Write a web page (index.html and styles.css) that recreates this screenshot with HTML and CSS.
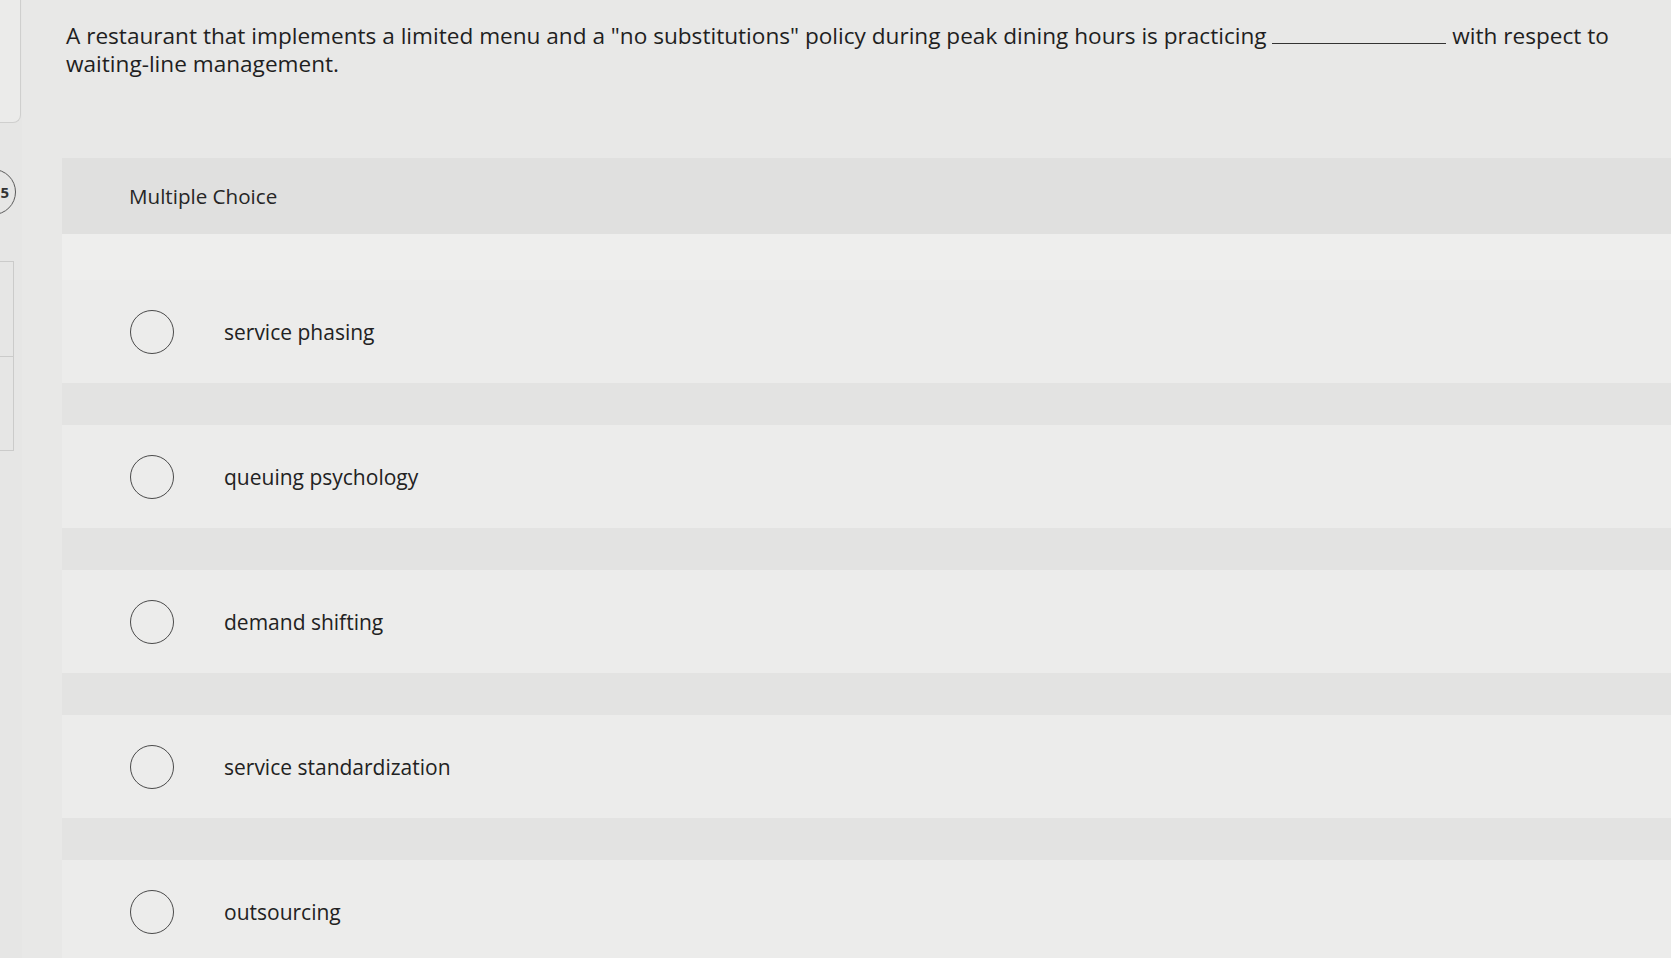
FILE: index.html
```html
<!DOCTYPE html>
<html lang="en">
<head>
<meta charset="utf-8">
<title>Multiple Choice</title>
<link rel="stylesheet" href="styles.css">
</head>
<body>
<div class="page">
  <aside class="rail">
    <div class="rail-card"></div>
    <div class="rail-badge"><span>5</span></div>
    <div class="rail-box"><div class="rail-box-top"></div><div class="rail-box-bottom"></div></div>
  </aside>
  <main class="main">
    <p class="question">A restaurant that implements a limited menu and a "no substitutions" policy during peak dining hours is practicing <span class="blank"></span> with respect to<br>waiting-line management.</p>
    <section class="panel">
      <div class="panel-head">Multiple Choice</div>
      <div class="panel-spacer"></div>
      <div class="option"><div class="option-body"><span class="radio"></span><span class="label">service phasing</span></div><div class="band"></div></div>
      <div class="option"><div class="option-body"><span class="radio"></span><span class="label">queuing psychology</span></div><div class="band"></div></div>
      <div class="option"><div class="option-body"><span class="radio"></span><span class="label">demand shifting</span></div><div class="band"></div></div>
      <div class="option"><div class="option-body"><span class="radio"></span><span class="label">service standardization</span></div><div class="band"></div></div>
      <div class="option"><div class="option-body"><span class="radio"></span><span class="label">outsourcing</span></div><div class="band"></div></div>
    </section>
  </main>
</div>
</body>
</html>
```

FILE: styles.css
```css
html, body {
  margin: 0;
  padding: 0;
  height: 100%;
  overflow: hidden;
}

body {
  background: #e8e8e7;
  font-family: "Open Sans", Lato, "Liberation Sans", sans-serif;
  color: #222;
}

.page {
  display: flex;
  height: 958px;
  overflow: hidden;
}

.rail {
  width: 22px;
  flex: none;
  display: flex;
  flex-direction: column;
  background: #e6e6e5;
}

.rail-card {
  flex: none;
  height: 122px;
  width: 20px;
  border: 1px solid #cfcfce;
  border-left: none;
  border-top: none;
  border-bottom-right-radius: 8px;
  background: #ebebea;
}

.rail-badge {
  flex: none;
  margin-top: 46px;
  margin-left: -30px;
  width: 46px;
  height: 46px;
  border: 1.5px solid #5a5a5a;
  border-radius: 50%;
  display: flex;
  align-items: center;
  justify-content: flex-end;
  padding-right: 12px;
  box-sizing: border-box;
  font-size: 15px;
  font-weight: 700;
  color: #333;
}

.rail-badge span {
  margin-right: -6px;
}

.rail-box {
  flex: none;
  margin-top: 46px;
  width: 13px;
  height: 188px;
  border: 1px solid #cbcbca;
  border-left: none;
  display: flex;
  flex-direction: column;
}

.rail-box-top {
  height: 94px;
  border-bottom: 1px solid #cbcbca;
}

.main {
  flex: 1;
  display: flex;
  flex-direction: column;
  padding-left: 40px;
  min-width: 0;
}

.question {
  flex: none;
  margin: 0;
  padding-top: 22px;
  padding-left: 4px;
  font-size: 22.6px;
  line-height: 28px;
  color: #1f1f1f;
  white-space: nowrap;
  height: 136px;
}

.blank {
  display: inline-block;
  width: 174px;
  height: 18px;
  border-bottom: 1.5px solid #333;
  vertical-align: baseline;
}

.panel {
  flex: none;
  background: #ebebeb;
  display: flex;
  flex-direction: column;
}

.panel-head {
  height: 76px;
  flex: none;
  background: #e0e0df;
  display: flex;
  align-items: center;
  padding-left: 67px;
  font-size: 20.6px;
  color: #262626;
}

.panel-spacer {
  height: 46px;
  flex: none;
  background: #eeeeed;
}

.option {
  flex: none;
  display: flex;
  flex-direction: column;
}

.option-body {
  height: 103px;
  display: flex;
  align-items: center;
  padding-left: 68px;
  background: #ececeb;
}

.band {
  height: 42px;
  background: #e3e3e2;
}

.radio {
  width: 44px;
  height: 44px;
  box-sizing: border-box;
  border: 1.5px solid #4a4a4a;
  border-radius: 50%;
  flex: none;
}

.label {
  margin-left: 50px;
  font-size: 21px;
  color: #222;
}
```
